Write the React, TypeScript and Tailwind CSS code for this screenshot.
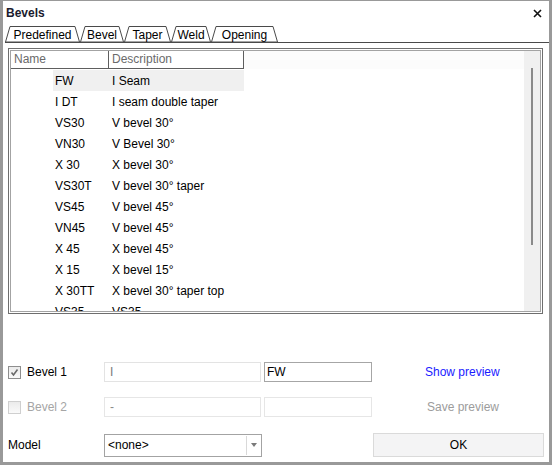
import React from "react";

const TABS = [
  { label: "Predefined", w: 75 },
  { label: "Bevel", w: 44 },
  { label: "Taper", w: 47 },
  { label: "Weld", w: 40 },
  { label: "Opening", w: 67 },
];

const ROWS = [
  ["FW", "I Seam"],
  ["I DT", "I seam double taper"],
  ["VS30", "V bevel 30°"],
  ["VN30", "V Bevel 30°"],
  ["X 30", "X bevel 30°"],
  ["VS30T", "V bevel 30° taper"],
  ["VS45", "V bevel 45°"],
  ["VN45", "V bevel 45°"],
  ["X 45", "X bevel 45°"],
  ["X 15", "X bevel 15°"],
  ["X 30TT", "X bevel 30° taper top"],
  ["VS35", "VS35"],
];

function Tab({ label, w }: { label: string; w: number }) {
  return (
    <div className="relative h-[16px] shrink-0" style={{ width: w }}>
      <svg className="absolute inset-0" width={w} height={16}>
        <polygon
          points={`0.5,16 5,0.5 ${w - 5},0.5 ${w - 0.5},16`}
          fill="#fff"
          stroke="#4a4a4a"
          strokeWidth="1"
        />
      </svg>
      <div className="relative text-center leading-[16px] pt-px">{label}</div>
    </div>
  );
}

function Checkbox({ checked, disabled }: { checked?: boolean; disabled?: boolean }) {
  return (
    <div
      className={`w-[13px] h-[13px] border flex items-center justify-center bg-gradient-to-b from-[#ebebeb] to-[#fafafa] ${
        disabled ? "border-[#cfcfcf]" : "border-[#8e8e8e]"
      }`}
    >
      {checked && (
        <svg width="9" height="9" viewBox="0 0 9 9">
          <path d="M1.5 4.5 L3.5 7 L7.5 1.5" fill="none" stroke="#6a6a6a" strokeWidth="1.6" />
        </svg>
      )}
    </div>
  );
}

export default function App() {
  return (
    <div
      className="w-[552px] h-[465px] bg-white border-x-[3px] border-b-[3px] border-t border-[#999999] flex flex-col text-[12px] text-black overflow-hidden"
      style={{ fontFamily: '"Liberation Sans", Arial, sans-serif' }}
    >
      {/* Title */}
      <div className="h-[23px] flex items-center justify-between pl-[3px] pr-[7px] pt-px shrink-0">
        <span className="font-bold text-[#1b1b2e]">Bevels</span>
        <svg width="9" height="9" viewBox="0 0 9 9">
          <path d="M1 1 L8 8 M8 1 L1 8" stroke="#111" strokeWidth="1.6" />
        </svg>
      </div>

      {/* Tabs */}
      <div className="mt-[2px] ml-[2px] flex items-end border-b border-[#4a4a4a] shrink-0">
        {TABS.map((t) => (
          <Tab key={t.label} label={t.label} w={t.w} />
        ))}
      </div>

      {/* List */}
      <div className="mt-[5px] ml-[5px] mr-[6px] h-[266px] border border-[#6e6e6e] p-px shrink-0">
        <div className="h-full border border-[#a3a3a3] flex">
          <div className="flex-1 overflow-hidden">
            <div className="flex h-[18px] text-[#6a6a6a]">
              <div className="w-[98px] border-r border-b border-[#5e5e5e] pl-[3px] leading-[17px]">Name</div>
              <div className="w-[135px] border-r border-b border-[#5e5e5e] pl-[3px] leading-[17px]">Description</div>
              <div className="flex-1 bg-[#fcfcfc]" />
            </div>
            <div className="pt-px">
              {ROWS.map(([name, desc], i) => (
                <div key={name} className="flex h-[21px] items-center">
                  <div className="w-[42px]" />
                  <div
                    className={`flex h-full items-center ${i === 0 ? "bg-[#f0f0f0]" : ""}`}
                  >
                    <div className="w-[56px] pl-[2px]">{name}</div>
                    <div className="w-[135px] pl-[3px]">{desc}</div>
                  </div>
                </div>
              ))}
            </div>
          </div>
          <div className="w-[16px] bg-[#f0f0f0] relative">
            <div className="absolute left-[7px] top-[17px] w-[2px] h-[177px] bg-[#8a8a8a]" />
          </div>
        </div>
      </div>

      {/* Controls */}
      <div className="pl-[5px]">
        <div className="mt-[48px] flex items-center h-[20px]">
          <div className="w-[96px] flex items-center gap-[6px]">
            <Checkbox checked />
            <span>Bevel 1</span>
          </div>
          <div className="w-[157px] h-[20px] border border-[#e3e3e3] pl-[5px] leading-[18px] text-[#7a7a7a]">I</div>
          <div className="ml-[3px] w-[108px] h-[20px] border border-[#a6a6a6] pl-[2px] leading-[18px]">FW</div>
          <span className="ml-[53px] text-[#1a1aff]">Show preview</span>
        </div>

        <div className="mt-[15px] flex items-center h-[20px]">
          <div className="w-[96px] flex items-center gap-[6px] text-[#a5a5a5]">
            <Checkbox disabled />
            <span>Bevel 2</span>
          </div>
          <div className="w-[157px] h-[20px] border border-[#e6e6e6] pl-[5px] leading-[18px] text-[#8a8a8a]">-</div>
          <div className="ml-[3px] w-[108px] h-[20px] border border-[#e6e6e6]" />
          <span className="ml-[55px] text-[#9c9c9c]">Save preview</span>
        </div>

        <div className="mt-[16px] flex items-center h-[24px]">
          <div className="w-[96px]">Model</div>
          <div className="w-[158px] h-[23px] border border-[#a3a3a3] flex items-center">
            <span className="flex-1 pl-[3px]">&lt;none&gt;</span>
            <div className="w-[15px] h-[19px] border-l border-[#d9d9d9] flex items-center justify-center">
              <svg width="6" height="4" viewBox="0 0 6 4">
                <path d="M0 0 L6 0 L3 4 Z" fill="#7a7a7a" />
              </svg>
            </div>
          </div>
          <div className="ml-[111px] w-[171px] h-[24px] border border-[#dadada] bg-[#f4f4f5] flex items-center justify-center">
            OK
          </div>
        </div>
      </div>
    </div>
  );
}
